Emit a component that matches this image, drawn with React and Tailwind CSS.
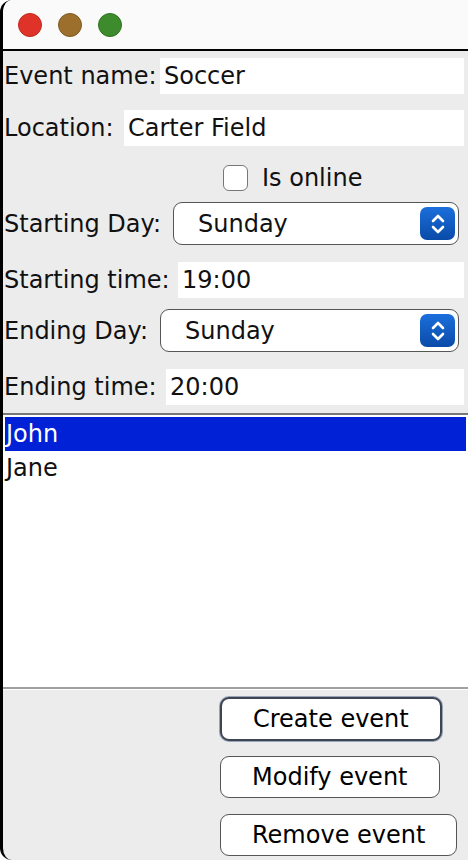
import React from 'react';

// Swing-on-macOS style event editor window
const font = { fontFamily: '"DejaVu Sans", "Liberation Sans", sans-serif' };

const TextRow = ({ label, value, labelW, className = '' }) => (
  <div className={`flex items-center h-[36px] ${className}`}>
    <span className="shrink-0 pl-[1px]" style={{ width: labelW }}>{label}</span>
    <div className="flex-1 h-full bg-white flex items-center pl-[4px] mr-[4px]">{value}</div>
  </div>
);

const Chevrons = () => (
  <svg width="16" height="24" viewBox="0 0 16 24" fill="none" stroke="white" strokeWidth="2.6" strokeLinecap="round" strokeLinejoin="round">
    <path d="M3 9 L8 4 L13 9" />
    <path d="M3 15 L8 20 L13 15" />
  </svg>
);

const ComboRow = ({ label, value, labelW, className = '' }) => (
  <div className={`flex items-center h-[43px] ${className}`}>
    <span className="shrink-0 pl-[1px]" style={{ width: labelW }}>{label}</span>
    <div className="flex-1 h-full mr-[9px] bg-white border-[1.5px] border-[#555] rounded-[9px] flex items-center justify-between pl-[24px] pr-[3px]">
      <span>{value}</span>
      <div className="w-[35px] h-[33px] rounded-[7px] bg-gradient-to-b from-[#1b6fdc] to-[#0a4ba8] flex items-center justify-center">
        <Chevrons />
      </div>
    </div>
  </div>
);

const MacButton = ({ children, focused }) => (
  <button
    className={`bg-white rounded-[9px] px-[31px] text-black leading-none ${
      focused
        ? 'h-[44px] border-2 border-[#3f4553] shadow-[0_0_0_1px_#9aa4b8]'
        : 'h-[42px] border-[1.5px] border-[#555]'
    }`}
  >
    {children}
  </button>
);

export default function App() {
  return (
    <div
      className="w-[468px] h-[860px] bg-[#ececec] border-l-[3px] border-black rounded-tl-[12px] rounded-bl-[12px] overflow-hidden flex flex-col text-[24px] text-[#111]"
      style={font}
    >
      {/* title bar */}
      <div className="h-[51px] bg-[#fafafa] border-b-2 border-black flex items-center gap-[16px] pl-[15px] shrink-0">
        <span className="w-[24px] h-[24px] rounded-full bg-[#df3228] border border-[#c0281f]" />
        <span className="w-[24px] h-[24px] rounded-full bg-[#9c6f2c] border border-[#7f5a22]" />
        <span className="w-[24px] h-[24px] rounded-full bg-[#3d8b2d] border border-[#2f7222]" />
      </div>

      <TextRow label="Event name:" value="Soccer" labelW={157} className="mt-[7px]" />
      <TextRow label="Location:" value="Carter Field" labelW={121} className="mt-[16px]" />

      <div className="flex items-center h-[36px] mt-[14px] pl-[220px]">
        <span className="w-[25px] h-[26px] bg-white border-[1.5px] border-[#777] rounded-[6px]" />
        <span className="ml-[14px]">Is online</span>
      </div>

      <ComboRow label="Starting Day:" value="Sunday" labelW={170} className="mt-[6px]" />
      <TextRow label="Starting time:" value="19:00" labelW={175} className="mt-[17px]" />
      <ComboRow label="Ending Day:" value="Sunday" labelW={157} className="mt-[11px]" />
      <TextRow label="Ending time:" value="20:00" labelW={163} className="mt-[17px]" />

      {/* list */}
      <div className="mt-[8px] border-t-2 border-[#777] bg-white h-[276px] pt-[2px] pl-[2px] pr-[2px] border-b-2 border-b-[#a0a0a0]">
        <div className="h-[34px] bg-[#0021d6] text-white flex items-center pl-[1px]">John</div>
        <div className="h-[34px] flex items-center pl-[1px]">Jane</div>
      </div>

      {/* buttons */}
      <div className="border-t border-white flex flex-col items-start pl-[217px] pt-[7px]">
        <MacButton focused>Create event</MacButton>
        <div className="mt-[15px]">
          <MacButton>Modify event</MacButton>
        </div>
        <div className="mt-[16px]">
          <MacButton>Remove event</MacButton>
        </div>
      </div>
    </div>
  );
}
